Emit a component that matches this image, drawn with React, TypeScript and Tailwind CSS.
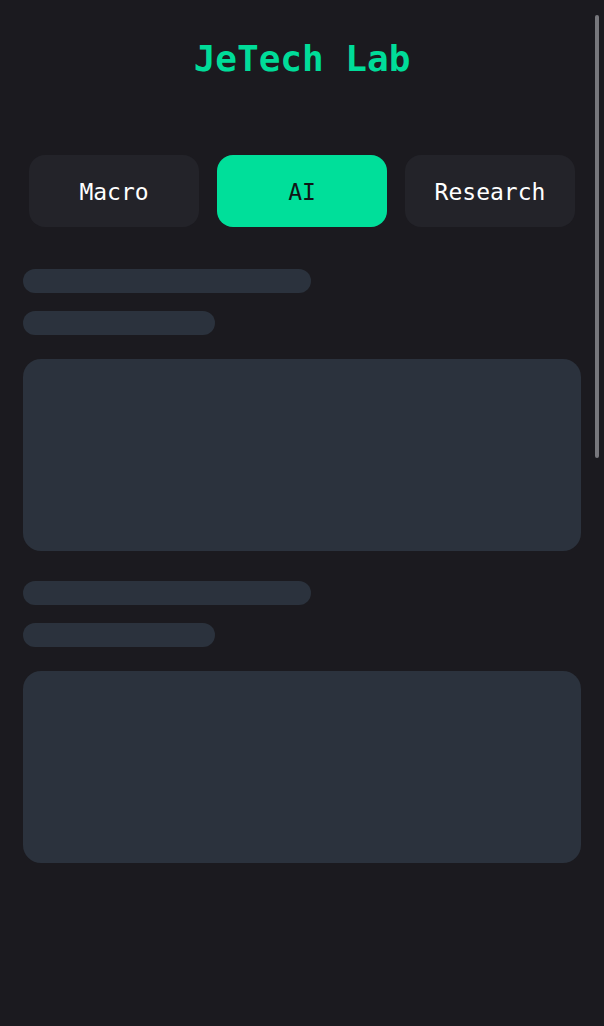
import React from "react";

const mono = { fontFamily: '"DejaVu Sans Mono", "Liberation Mono", monospace' };

function Skeleton() {
  return (
    <div className="flex flex-col">
      <div className="h-[24px] w-[288px] rounded-full bg-[#2b323d]" />
      <div className="mt-[18px] h-[24px] w-[192px] rounded-full bg-[#2b323d]" />
      <div className="mt-[24px] h-[192px] w-full rounded-[18px] bg-[#2b323d]" />
    </div>
  );
}

export default function App() {
  const tabs = ["Macro", "AI", "Research"];
  return (
    <div className="relative min-h-[1026px] w-full bg-[#1b1a1f]" style={mono}>
      <div className="px-[23px]">
        <div className="flex h-[120px] items-start justify-center pt-[38px]">
          <h1 className="text-[36px] font-bold leading-[42px] text-[#00dc99]">JeTech Lab</h1>
        </div>
        <div className="mt-[35px] grid grid-cols-3 gap-[18px] px-[6px]">
          {tabs.map((t) => (
            <div
              key={t}
              className={
                "flex h-[72px] items-center justify-center rounded-[16px] pt-[3px] text-[23px] " +
                (t === "AI" ? "bg-[#00df9a] text-[#111416]" : "bg-[#232329] text-white")
              }
            >
              {t}
            </div>
          ))}
        </div>
        <div className="mt-[42px] flex flex-col gap-[30px]">
          <Skeleton />
          <Skeleton />
        </div>
      </div>
      <div className="absolute right-[5px] top-[15px] h-[443px] w-[4px] rounded-full bg-[#77777c]" />
    </div>
  );
}
